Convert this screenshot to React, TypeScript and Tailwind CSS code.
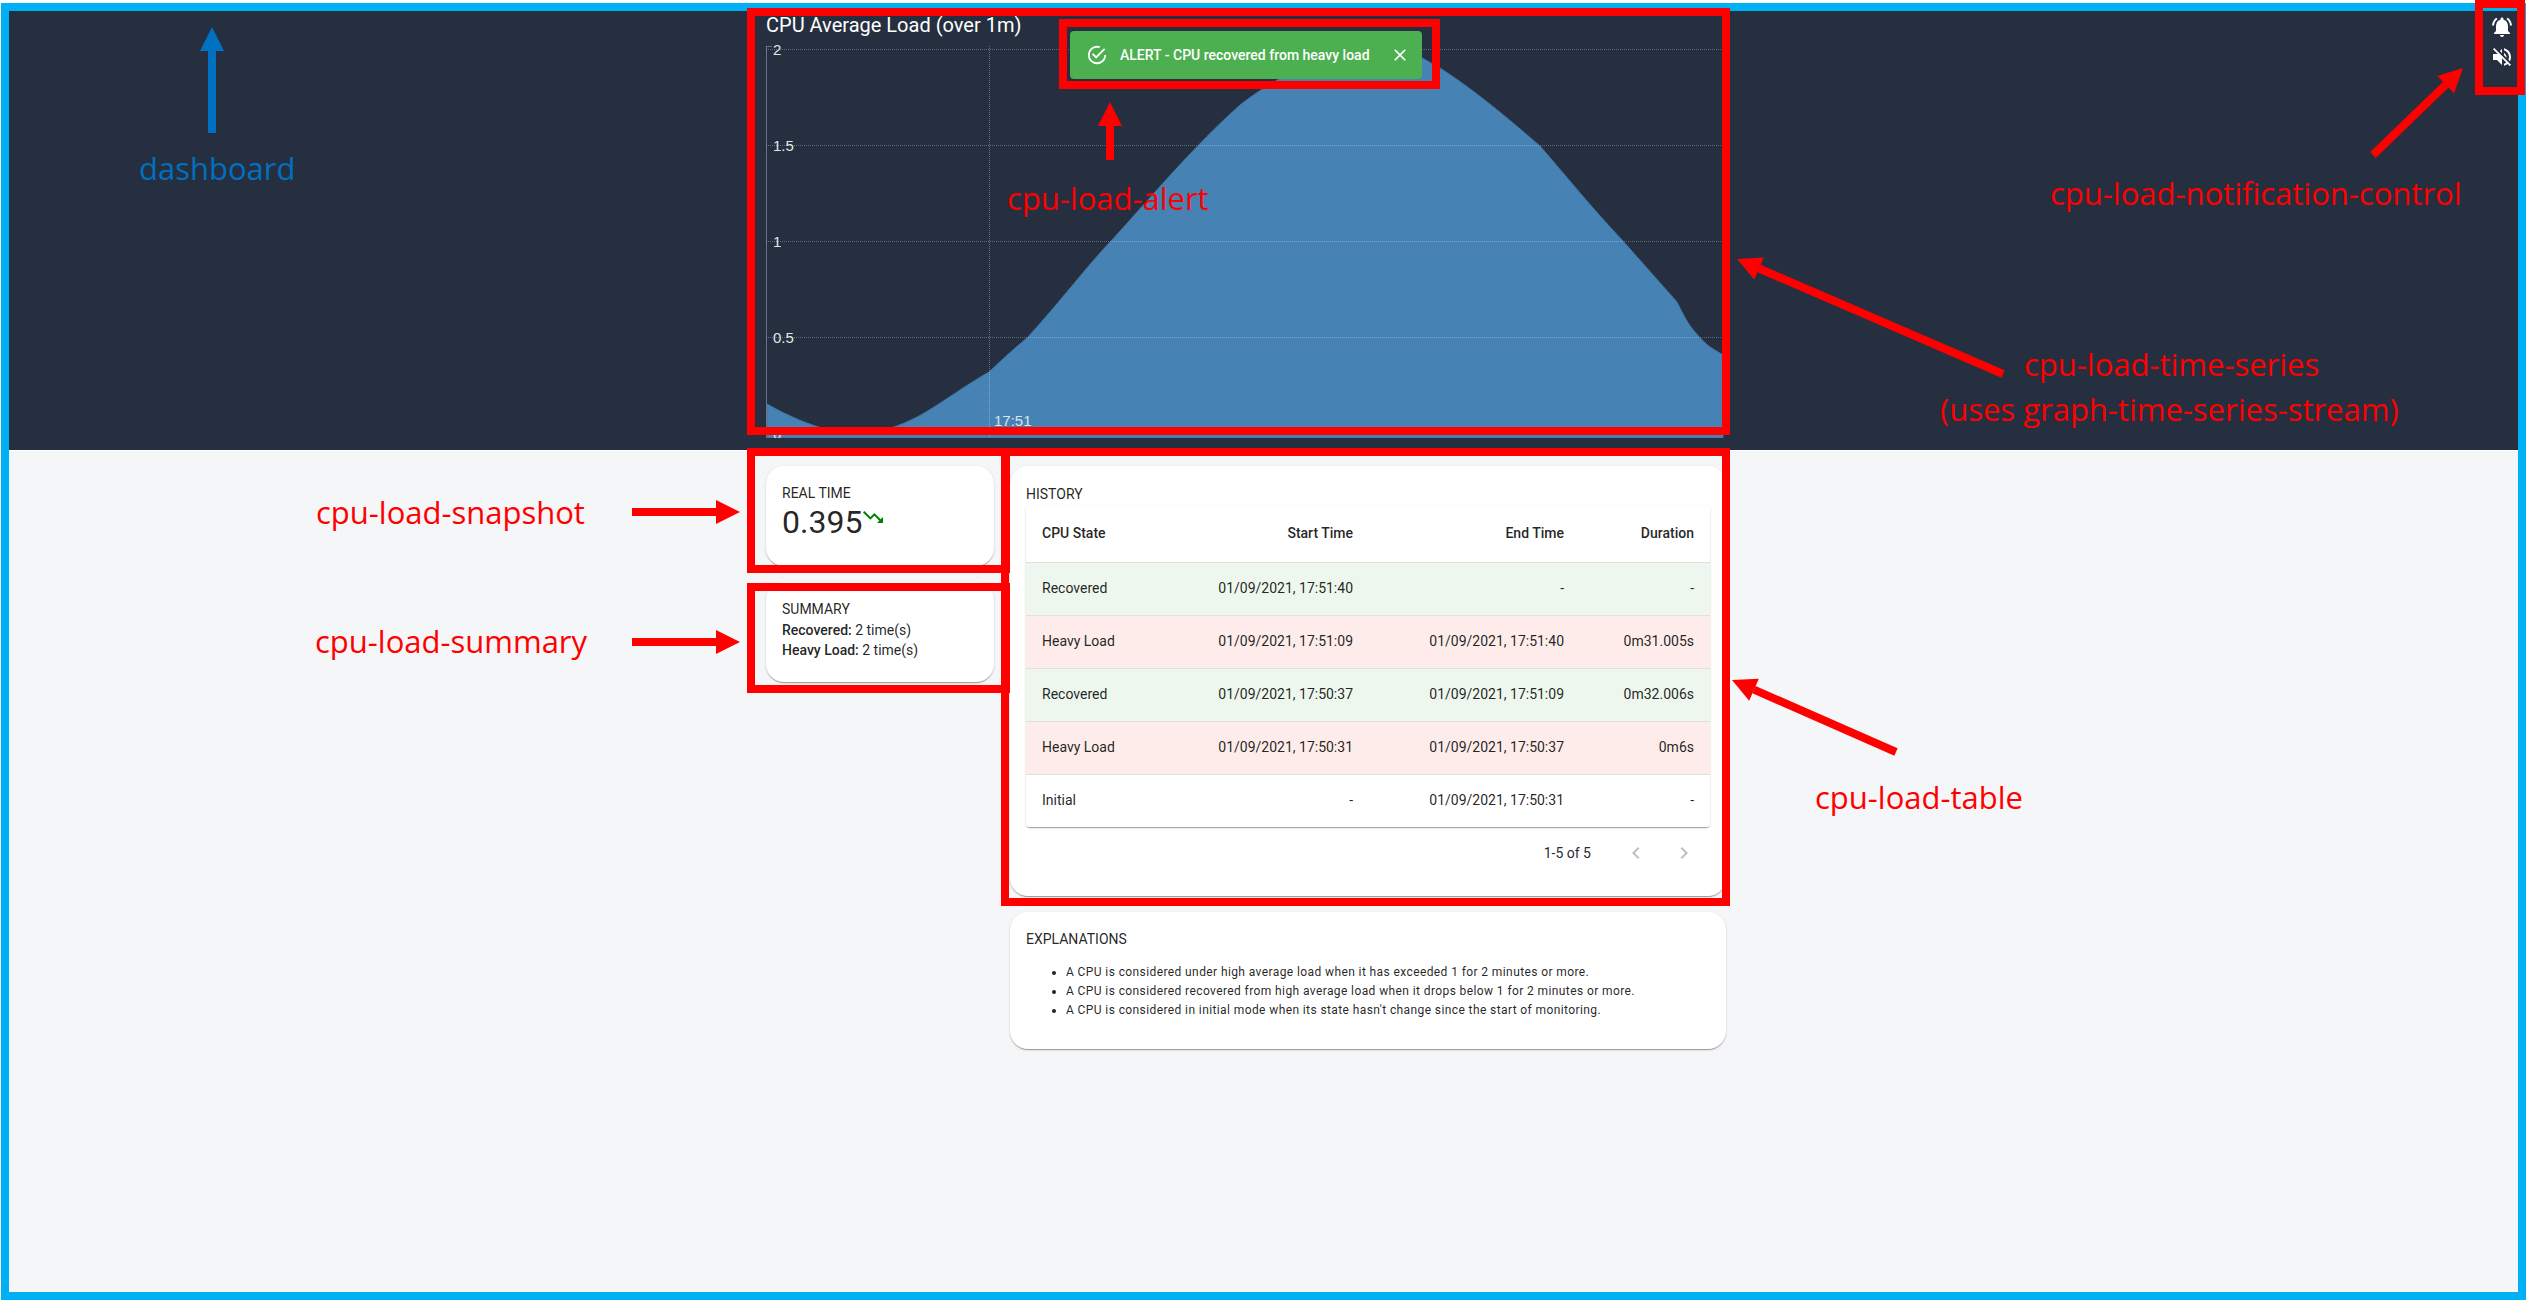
const rows = [
  { state: "Recovered", start: "01/09/2021, 17:51:40", end: "-", duration: "-", bg: "bg-[#edf7ed]" },
  { state: "Heavy Load", start: "01/09/2021, 17:51:09", end: "01/09/2021, 17:51:40", duration: "0m31.005s", bg: "bg-[#fdecea]" },
  { state: "Recovered", start: "01/09/2021, 17:50:37", end: "01/09/2021, 17:51:09", duration: "0m32.006s", bg: "bg-[#edf7ed]" },
  { state: "Heavy Load", start: "01/09/2021, 17:50:31", end: "01/09/2021, 17:50:37", duration: "0m6s", bg: "bg-[#fdecea]" },
  { state: "Initial", start: "-", end: "01/09/2021, 17:50:31", duration: "-", bg: "bg-white" },
];

const explanations = [
  "A CPU is considered under high average load when it has exceeded 1 for 2 minutes or more.",
  "A CPU is considered recovered from high average load when it drops below 1 for 2 minutes or more.",
  "A CPU is considered in initial mode when its state hasn't change since the start of monitoring.",
];

const cardClass =
  "bg-white rounded-[18px] shadow-[0_2px_1px_-1px_rgba(0,0,0,0.2),0_1px_1px_0_rgba(0,0,0,0.14),0_1px_3px_0_rgba(0,0,0,0.12)]";

function Chart() {
  // svg origin is at page (766, 39)
  const area =
    "M1 365 C20 376 45 387 64 391 C74 393 90 394.500 100 394 C120 392 140 385 160 373 C180 361 200 346 223 333 C240 317 250 308 261 299 C295 262 320 228 346 201 C385 158 430 105 474 66 C510 38 560 12 610 7 C640 6 655 19 674 29 C710 52 745 82 774 107 C800 137 825 168 857 202 L911 263 C918 277 922 285 929 293 C934 299 939 304 944 308 L957 316 L957 399 L1 399 Z";
  const labels = [
    { y: 11, t: "2" },
    { y: 107, t: "1.5" },
    { y: 203, t: "1" },
    { y: 299, t: "0.5" },
    { y: 395, t: "0" },
  ];
  return (
    <svg width="960" height="399" viewBox="0 0 960 399" className="block">
      <path d={area} fill="#4682b4" stroke="#3f76a3" strokeWidth="1" />
      <line x1="0.500" y1="7" x2="0.500" y2="399" stroke="#6b7280" strokeWidth="1" />
      <line x1="0" y1="7.500" x2="6" y2="7.500" stroke="#6b7280" strokeWidth="1" />
      {labels.slice(0, 4).map((l) => (
        <line key={l.y} x1="0" y1={l.y - 0.5} x2="957" y2={l.y - 0.5} stroke="rgba(255,255,255,0.28)" strokeWidth="1" strokeDasharray="1 1" />
      ))}
      <line x1="223.500" y1="7" x2="223.500" y2="399" stroke="rgba(255,255,255,0.32)" strokeWidth="1" strokeDasharray="1 1" />
      {labels.map((l) => (
        <text key={l.t} x="7" y={l.y + 5} fill="#e2e6ea" fontSize="15" fontFamily="'Liberation Sans', Arial, sans-serif">
          {l.t}
        </text>
      ))}
      <text x="228" y="387" fill="#d9e4ee" fontSize="15" fontFamily="'Liberation Sans', Arial, sans-serif">
        17:51
      </text>
    </svg>
  );
}

function Alert() {
  return (
    <div className="absolute left-[1061px] top-[20px] w-[352px] h-[48px] bg-[#4caf50] rounded-[4px] flex items-center text-white pl-4 pr-[12px]">
      <svg viewBox="0 0 24 24" className="w-[22px] h-[22px] fill-white shrink-0">
        <path d="M20,12A8,8 0 0,1 12,20A8,8 0 0,1 4,12A8,8 0 0,1 12,4C12.76,4 13.5,4.11 14.2,4.31L15.77,2.74C14.61,2.26 13.34,2 12,2A10,10 0 0,0 2,12A10,10 0 0,0 12,22A10,10 0 0,0 22,12M7.91,10.08L6.5,11.5L11,16L21,6L19.59,4.58L11,13.17L7.91,10.08Z" />
      </svg>
      <span className="ml-3 text-[14px] font-medium whitespace-nowrap">ALERT - CPU recovered from heavy load</span>
      <svg viewBox="0 0 24 24" className="ml-auto w-5 h-5 fill-white shrink-0">
        <path d="M19 6.41L17.59 5 12 10.59 6.41 5 5 6.41 10.59 12 5 17.59 6.41 19 12 13.41 17.59 19 19 17.59 13.41 12z" />
      </svg>
    </div>
  );
}

function NotificationControl() {
  return (
    <div className="absolute right-[4px] top-[4px] flex flex-col gap-[6px] fill-white">
      <svg viewBox="0 0 24 24" className="w-6 h-6">
        <path d="M7.58 4.08L6.15 2.65C3.75 4.48 2.17 7.3 2.03 10.5h2c.15-2.65 1.51-4.97 3.55-6.42zm12.39 6.42h2c-.15-3.2-1.73-6.02-4.12-7.85l-1.42 1.43c2.02 1.45 3.39 3.77 3.54 6.42zM18 11c0-3.07-1.64-5.64-4.5-6.32V4c0-.83-.67-1.5-1.5-1.5s-1.5.67-1.5 1.5v.68C7.63 5.36 6 7.92 6 11v5l-2 2v1h16v-1l-2-2v-5zm-6 11c.14 0 .27-.01.4-.04.65-.14 1.18-.58 1.44-1.18.1-.24.15-.5.15-.78h-4c.01 1.1.9 2 2.01 2z" />
      </svg>
      <svg viewBox="0 0 24 24" className="w-6 h-6">
        <path d="M16.5 12c0-1.77-1.02-3.29-2.5-4.03v2.21l2.45 2.45c.03-.2.05-.41.05-.63zm2.5 0c0 .94-.2 1.82-.54 2.64l1.51 1.51C20.63 14.91 21 13.5 21 12c0-4.28-2.99-7.86-7-8.77v2.06c2.89.86 5 3.54 5 6.71zM4.27 3L3 4.27 7.73 9H3v6h4l5 5v-6.73l4.25 4.25c-.67.52-1.42.93-2.25 1.18v2.06c1.38-.31 2.63-.95 3.69-1.81L19.73 21 21 19.73l-9-9L4.27 3zM12 4L9.91 6.09 12 8.18V4z" />
      </svg>
    </div>
  );
}

function HistoryTable() {
  return (
    <div className="rounded-[4px] overflow-hidden shadow-[0_2px_1px_-1px_rgba(0,0,0,0.2),0_1px_1px_0_rgba(0,0,0,0.14),0_1px_3px_0_rgba(0,0,0,0.12)]">
      <table className="w-full table-fixed border-collapse text-[14px] text-black/87">
        <colgroup>
          <col className="w-[164px]" />
          <col className="w-[179px]" />
          <col className="w-[211px]" />
          <col className="w-[130px]" />
        </colgroup>
        <thead>
          <tr className="h-[56px] border-b border-[#e0e0e0]">
            <th className="px-4 font-medium text-left">CPU State</th>
            <th className="px-4 font-medium text-right">Start Time</th>
            <th className="px-4 font-medium text-right">End Time</th>
            <th className="px-4 font-medium text-right">Duration</th>
          </tr>
        </thead>
        <tbody>
          {rows.map((r, i) => (
            <tr key={i} className={`h-[53px] ${r.bg} ${i < rows.length - 1 ? "border-b border-[#e0e0e0]" : ""}`}>
              <td className="px-4 text-left">{r.state}</td>
              <td className="px-4 text-right">{r.start}</td>
              <td className="px-4 text-right">{r.end}</td>
              <td className="px-4 text-right">{r.duration}</td>
            </tr>
          ))}
        </tbody>
      </table>
    </div>
  );
}

const frames = [
  "left-[747px] top-[8px] w-[983px] h-[427px]",
  "left-[1059px] top-[19px] w-[381px] h-[70px]",
  "left-[2475px] top-[0px] w-[50px] h-[95px]",
  "left-[747px] top-[448px] w-[263px] h-[125px]",
  "left-[747px] top-[583px] w-[263px] h-[110px]",
  "left-[1001px] top-[448px] w-[729px] h-[458px]",
];

const redLabels = [
  { text: "cpu-load-alert", cls: "left-[1007px] top-[175px]" },
  { text: "cpu-load-notification-control", cls: "left-[2050px] top-[170px]" },
  { text: "cpu-load-time-series", cls: "left-[2024px] top-[341px]" },
  { text: "(uses graph-time-series-stream)", cls: "left-[1940px] top-[386px]" },
  { text: "cpu-load-snapshot", cls: "left-[316px] top-[489px]" },
  { text: "cpu-load-summary", cls: "left-[315px] top-[618px]" },
  { text: "cpu-load-table", cls: "left-[1815px] top-[774px]" },
];

// tail x, tail y, tip x, tip y on the page
const redArrows = [
  [1110, 160, 1110, 102],
  [2373, 155, 2463, 68],
  [2003, 374, 1737, 259],
  [632, 512, 740, 512],
  [632, 642, 740, 642],
  [1896, 752, 1732, 680],
];

function Arrow({ x1, y1, x2, y2, color }: { x1: number; y1: number; x2: number; y2: number; color: string }) {
  const a = Math.atan2(y2 - y1, x2 - x1);
  const len = 24;
  const half = 12;
  const bx = x2 - Math.cos(a) * len;
  const by = y2 - Math.sin(a) * len;
  const nx = -Math.sin(a) * half;
  const ny = Math.cos(a) * half;
  return (
    <g>
      <line x1={x1} y1={y1} x2={bx} y2={by} stroke={color} strokeWidth="8" />
      <polygon points={`${x2},${y2} ${bx + nx},${by + ny} ${bx - nx},${by - ny}`} fill={color} />
    </g>
  );
}

function Annotations() {
  return (
    <div className="absolute inset-0 pointer-events-none font-['Open_Sans',sans-serif]">
      {frames.map((f) => (
        <div key={f} className={`absolute border-[8px] border-[#ff0000] ${f}`} />
      ))}
      <svg width="2526" height="1303" className="absolute left-0 top-0">
        <Arrow x1={212} y1={133} x2={212} y2={27} color="#0070c0" />
        {redArrows.map((p) => (
          <Arrow key={p.join()} x1={p[0]} y1={p[1]} x2={p[2]} y2={p[3]} color="#ff0000" />
        ))}
      </svg>
      <span className="absolute left-[139px] top-[145px] text-[31px] leading-[46px] text-[#0070c0] whitespace-nowrap">dashboard</span>
      {redLabels.map((l) => (
        <span key={l.text} className={`absolute text-[31px] leading-[46px] text-[#ff0000] whitespace-nowrap ${l.cls}`}>
          {l.text}
        </span>
      ))}
    </div>
  );
}

export default function App() {
  return (
    <div className="relative w-[2526px] h-[1303px] bg-white overflow-hidden font-['Roboto',sans-serif] text-[rgba(0,0,0,0.87)]">
      <div className="ml-px mt-[3px] w-[2525px] h-[1297px] border-[8px] border-[#00b0f5] bg-[#f5f6f8]">
        <header className="relative h-[439px] bg-[#262f3f] pl-[757px]">
          <h1 className="text-[20px] leading-[28px] text-white font-normal whitespace-nowrap">CPU Average Load (over 1m)</h1>
          <Chart />
          <Alert />
          <NotificationControl />
        </header>
        <div className="h-px bg-white" />
        <main className="flex gap-4 pl-[757px] pt-[15px]">
          <div className="w-[228px] flex flex-col gap-4">
            <section className={`${cardClass} h-[100px] px-4 pt-4`}>
              <p className="text-[14px] leading-[22px]">REAL TIME</p>
              <div className="flex items-start">
                <span className="text-[32px] leading-[36px]">0.395</span>
                <svg viewBox="0 0 24 24" className="w-6 h-6 fill-[#008000] -ml-px mt-[1px]">
                  <path d="M16 18l2.29-2.29-4.88-4.88-4 4L2 7.41 3.41 6l6 6 4-4 6.3 6.29L22 12v6z" />
                </svg>
              </div>
            </section>
            <section className={`${cardClass} h-[100px] px-4 pt-4`}>
              <p className="text-[14px] leading-[22px]">SUMMARY</p>
              <p className="text-[14px] leading-[20px]"><b className="font-medium">Recovered:</b> 2 time(s)</p>
              <p className="text-[14px] leading-[20px]"><b className="font-medium">Heavy Load:</b> 2 time(s)</p>
            </section>
          </div>
          <div className="w-[716px] flex flex-col gap-4">
            <section className={`${cardClass} h-[430px] p-4`}>
              <p className="text-[14px] leading-[24px]">HISTORY</p>
              <HistoryTable />
              <div className="flex items-center justify-end h-[52px] text-[14px] text-black/87">
                <span>1-5 of 5</span>
                <svg viewBox="0 0 24 24" className="w-6 h-6 fill-black/25 ml-[33px]">
                  <path d="M15.41 7.41L14 6l-6 6 6 6 1.41-1.41L10.83 12z" />
                </svg>
                <svg viewBox="0 0 24 24" className="w-6 h-6 fill-black/25 ml-6 mr-[14px]">
                  <path d="M10 6L8.59 7.41 13.17 12l-4.58 4.59L10 18l6-6z" />
                </svg>
              </div>
            </section>
            <section className={`${cardClass} h-[137px] px-4 pt-4`}>
              <p className="text-[14px] leading-[22px]">EXPLANATIONS</p>
              <ul className="list-disc pl-10 mt-[13px] text-[12px] leading-[19px] tracking-[0.4px]">
                {explanations.map((e) => (
                  <li key={e}>{e}</li>
                ))}
              </ul>
            </section>
          </div>
        </main>
      </div>
      <Annotations />
    </div>
  );
}
